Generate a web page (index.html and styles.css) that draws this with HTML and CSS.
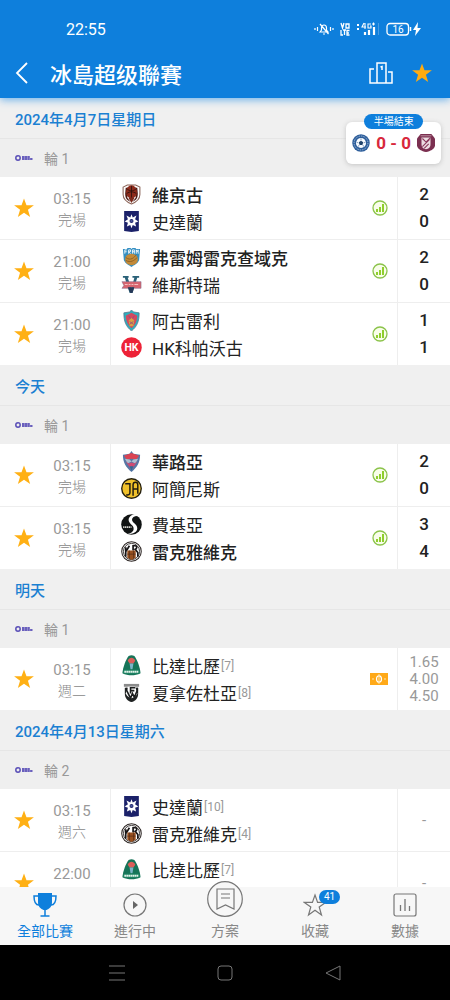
FILE: index.html
```html
<!DOCTYPE html>
<html lang="zh-Hant">
<head>
  <meta charset="UTF-8">
  <meta name="viewport" content="width=device-width, initial-scale=1">
  <title>冰島超级聯賽</title>
  <link rel="stylesheet" href="styles.css">
</head>
<body>
  <!-- icons and club badges -->
  <svg class="sprites" aria-hidden="true">
    <symbol id="star" viewBox="0 0 24 24"><path fill="currentColor" d="M12 1.5l2.7 7.6h8.1l-6.5 4.9 2.4 7.9-6.7-4.7-6.7 4.7L7.700 14 1.200 9.100h8.100z"/></symbol>
    <symbol id="stats" viewBox="0 0 16 16"><circle cx="8" cy="8" r="7" fill="#f8fde9" stroke="#8bc34a" stroke-width="1.300"/><path d="M4 9h2v3H4zM7 7h2v5H7zM10 4h2v8h-2z" fill="#8fce2d"/></symbol>
    <symbol id="league" viewBox="0 0 18 8"><circle cx="3" cy="4" r="2.200" fill="#efefef" stroke="#5b50b8" stroke-width="1.500"/><path d="M7 3h8M7 5h10.500" stroke="#6a60bd" stroke-width="1.800" stroke-dasharray="2.400 .3"/></symbol>
    <symbol id="vikingur" viewBox="0 0 20 20"><path d="M2 3l4-2h8l4 2v7c0 4-3 7-8 9-5-2-8-5-8-9z" fill="#fff" stroke="#8a6357"/><path d="M4.500 3.500h2L6 13l3 4c-4-2-5-4-5-8zM15.500 3.500h-2L14 13l-3 4c4-2 5-4 5-8z" fill="#4a1a14"/><ellipse cx="10" cy="7.500" rx="5.200" ry="6.300" fill="#8c2b1b"/><path d="M10 2v11M6 5c3 2 5 2 8 0M5.500 9c3-2 6-2 9 0" stroke="#2c120d" stroke-width=".8" fill="none"/><path d="M7 13l3 5 3-5" fill="#7a2a1c"/></symbol>
    <symbol id="stjarnan" viewBox="0 0 20 20"><path d="M3 0h14v19L10 20l-7-1z" fill="#1b2169"/><path d="M10 3l1.200 3.200 3.600-1.800-1.400 3.400 3.100 2.200-3.100 1.200 1 3.500-3.200-1.400L10 16.500l-1.200-3.200-3.200 1.400 1-3.500L3.500 10l3.100-2.200-1.400-3.400 3.600 1.800z" fill="#fff"/><circle cx="10" cy="9.500" r="1.900" fill="#1b2169"/><path d="M9 9.500h2" stroke="#91a5df" stroke-width=".8"/></symbol>
    <symbol id="fram" viewBox="0 0 20 22"><path d="M1 2h4l1-1h3l1 1 1-1h3l1 1h4l-1 12c-2 4-5 5-8 7-3-2-6-3-8-7z" fill="#348fc3"/><path d="M3 3v4M3 3h2M3 5h2M7 7V3h2v2H7l2 2M11 7V3h2v4M11 5h2M15 7V3l1 2 1-2v4" fill="none" stroke="#fff" stroke-width=".9"/><ellipse cx="10" cy="13" rx="6.700" ry="6" fill="#c38a38"/><path d="M4 11c5 4 9 0 11-3M4 14c5 3 9 0 12-3" fill="none" stroke="#805721" stroke-width=".8"/></symbol>
    <symbol id="vestri" viewBox="0 0 22 20"><path d="M2 1h6v2H7l4 11 3-11h-2V1h7v2h-2l-5 16H9L4 3H2z" fill="#2a6178"/><path d="M1 7h20v7h-7l-1-1H9l-1 1H1l2-3z" fill="#d7656f" stroke="#8a6e8c" stroke-width=".6"/><path d="M4 10h3M8 10h2M11 10h2M14 10h4" stroke="#f3c3c3" stroke-width="1"/><path d="M7 13l3 6h2l2-6" fill="#263857"/></symbol>
    <symbol id="ia-shield" viewBox="0 0 20 22"><path d="M10 0l2 2 6 1c0 9-2 14-8 19C4 17 2 12 2 3l6-1z" fill="#2eaebd" stroke="#547389" stroke-width=".8"/><path d="M10 3l6 3c0 5-2 10-6 13-4-3-6-8-6-13z" fill="#d34960"/><path d="M10 8l3 3-1 6h-4l-1-6z" fill="#dba044"/><path d="M7 6l2 3M13 6l-2 3M8 12l4 3M12 12l-4 3" stroke="#8a4a80" stroke-width=".8"/></symbol>
    <symbol id="hk" viewBox="0 0 20 20"><circle cx="10" cy="10" r="9.800" fill="#ed2237"/><text x="10" y="13.500" text-anchor="middle" class="badge-letters" fill="#fff">HK</text></symbol>
    <symbol id="valur" viewBox="0 0 20 22"><path d="M10 0l2 3 7 1c0 8-3 13-9 18C4 17 1 12 1 4l7-1z" fill="#5777a5"/><path d="M2 5l8-3 8 3-3 4-5-1-5 1z" fill="#da4353"/><path d="M3 8l5 1 2 2 2-2 5-1-3 5-4-2-4 2z" fill="#aebed0"/><path d="M4 11l3 2 3-1 3 1 3-2-6 9z" fill="#cf4a72"/><path d="M8 16h4l-2 5z" fill="#2d6a96"/></symbol>
    <symbol id="ia" viewBox="0 0 20 20"><circle cx="10" cy="10" r="9.300" fill="#f0c02a" stroke="#25200f" stroke-width="1.300"/><path d="M4 5.500h4.500v8.500c0 1.800-1.500 2.500-3.500 2M11.500 17V6.500c0-3.300 4.500-3.300 4.500 0V15M11.500 10.500H16" fill="none" stroke="#201b10" stroke-width="1.400"/></symbol>
    <symbol id="fylkir" viewBox="0 0 20 20"><circle cx="10" cy="10" r="9.800" fill="#101313"/><path d="M13.500 0C9 1 6.500 3.500 7.500 7c1 3 5 4 4.500 7.500-.3 2.500-3 4.300-6 4.500 6 0 9.500-2 9.500-5.500 0-4-5-5-5-8 0-2.500 2.500-3.800 6-3.500z" fill="#fff"/><path d="M2 12.500h8" stroke="#d4d4cf" stroke-width="1.600" stroke-dasharray="1.300 .5"/></symbol>
    <symbol id="kr" viewBox="0 0 20 20"><circle cx="10" cy="10" r="9.300" fill="#fff" stroke="#2b2422" stroke-width="1"/><circle cx="10" cy="10" r="7.700" fill="#fff" stroke="#211d1c" stroke-width=".8"/><path d="M4.500 15V6M8 4.500l-3 5M11.500 9V4.500h2c2 0 2 3 0 3.500l2.500 3v4" stroke="#171516" stroke-width="1.600" fill="none"/><path d="M6 9h8v7l-4 2-4-2z" fill="#98501f"/><path d="M8 9v8M12 9v8M6 12.500h8" stroke="#4c2916" stroke-width=".6"/></symbol>
    <symbol id="breidablik" viewBox="0 0 20 22"><path d="M7 1c2-1 4-1 6 0 3 4 6 12 6.500 18-6 3-13 3-19 0C1 13 4 5 7 1z" fill="#167458"/><path d="M6 6c2-4 6-4 8 0l-2 3H8z" fill="#da5d59"/><path d="M8 9h4l-1 6H9z" fill="#7ab4c7"/><path d="M2 15.500h16l1 3.500c-6 1-12 1-18 0z" fill="#218565"/><path d="M2.500 17.500h15" stroke="#e7f5ed" stroke-width="2" stroke-dasharray="1.700 .4"/></symbol>
    <symbol id="fh" viewBox="0 0 20 22"><path d="M2 2h16v3H2z" fill="#8b8b8b"/><path d="M3 6h14v6c0 5-3 8-7 9-4-1-7-4-7-9z" fill="#202323"/><path d="M6 5h8l2 7c-1 3-3 4-6 5-3-1-5-2-6-5z" fill="#fff"/><path d="M5 6v3l4 8 2-5 2 4 3-7V6M9 12V6h5M9 9h4" stroke="#1b1d1d" stroke-width="1.700" fill="none"/></symbol>
    <symbol id="home-club" viewBox="0 0 20 20"><circle cx="10" cy="10" r="9.700" fill="#2d5e9b"/><circle cx="10" cy="10" r="7.700" fill="none" stroke="#bfd3e6" stroke-dasharray="1 1"/><circle cx="10" cy="10" r="5.600" fill="#f9fcff"/><path d="M10 7.500l2.500 1.800-1 3h-3l-1-3z" fill="#20436b"/><path d="M10 5v2M5 9l2 1M15 9l-2 1M7 14l1-2M13 14l-1-2" stroke="#7993b7"/></symbol>
    <symbol id="away-club" viewBox="0 0 20 20"><path d="M4 0h12l4 5v8c-1 4-5 6-10 7-5-1-9-3-10-7V5z" fill="#7b2f50"/><path d="M5 4h10v7c0 4-2 5-5 6-3-1-5-2-5-6z" fill="#ecdde2"/><path d="M6 5l4 4 5-5M6 14l8-8M8 16l5-5" stroke="#8a395b" stroke-width="1.200" fill="none"/><path d="M4 2h12" stroke="#c29ba9"/></symbol>
  </svg>

  <div class="screen">
    <header class="header">
      <div class="status-bar">
        <time class="clock">22:55</time>
        <div class="status-icons">
          <svg width="20" height="16" viewBox="0 0 20 16" fill="none" stroke="#fff" stroke-width="1.200"><path d="M1 7v2M3.500 6v4M16.500 6v4M19 7v2M6 11l1.500-2V7c0-4 5-4 5 0v2l1.500 2zM9 13h2M6 3l8.500 10"/></svg>
          <svg width="10" height="14" viewBox="0 0 10 14" fill="none" stroke="#fff" stroke-width="1.300"><path d="M1 1l1.500 5L4 1M6 2h3v4H6zM1 8v5h2M3 8h3M4.500 8v5M9.500 8.500H7v4.500h2.500M7 11h2"/></svg>
          <svg width="24" height="16" viewBox="0 0 24 16"><path d="M2 3v2M2 7v2" stroke="#fff" stroke-width="2"/><path d="M8 2L6 6h4M9 2v6M15 3h-3v4h3V5h-1M16 3h3M17.500 1.500v3" fill="none" stroke="#fff" stroke-width="1.100"/><path d="M9 11v3M13 9v5M18 6v8" stroke="#fff" stroke-width="2.200"/><path d="M22.500 2v12" stroke="#489be2"/></svg>
          <svg width="36" height="16" viewBox="0 0 36 16"><rect x="1" y="2.500" width="21.500" height="11.500" rx="3" fill="none" stroke="#fff" stroke-width="1.300"/><text x="12" y="12" text-anchor="middle" class="battery-text" fill="#fff">16</text><path d="M24.500 6v4" stroke="#fff" stroke-width="1.500"/><path d="M32 1l-5 8h3l-1 6 6-8h-3.500z" fill="#fff"/></svg>
        </div>
      </div>
      <div class="title-bar">
        <button class="icon-btn back" aria-label="返回"><svg width="14" height="22" viewBox="0 0 14 22"><path d="M12 1L2 11l10 10" fill="none" stroke="#fff" stroke-width="1.800"/></svg></button>
        <h1>冰島超级聯賽</h1>
        <button class="icon-btn" aria-label="排名"><svg width="24" height="22" viewBox="0 0 24 22"><path d="M5 7H1v14h22V10h-4M8 21V1h9v20M11.500 5L13 4.500V8" fill="none" stroke="#fff" stroke-width="1.500"/></svg></button>
        <button class="icon-btn gold" aria-label="收藏聯賽"><svg width="22" height="22"><use href="#star"/></svg></button>
      </div>
    </header>

    <main class="list">
      <a class="live-card" href="#">
        <span class="live-state">半場結束</span>
        <svg width="18" height="18"><use href="#home-club"/></svg>
        <span class="live-score">0 - 0</span>
        <svg width="18" height="18"><use href="#away-club"/></svg>
      </a>

      <section>
        <h2>2024年4月7日星期日</h2>
        <div class="round"><svg width="18" height="8"><use href="#league"/></svg>輪 1</div>
        <div class="match">
          <button class="fav" aria-label="收藏"><svg width="22" height="22"><use href="#star"/></svg></button>
          <div class="when"><span class="time">03:15</span><span>完場</span></div>
          <div class="teams">
            <div class="team win"><svg><use href="#vikingur"/></svg>維京古</div>
            <div class="team"><svg><use href="#stjarnan"/></svg>史達蘭</div>
          </div>
          <svg class="info" width="16" height="16"><use href="#stats"/></svg>
          <div class="score"><span>2</span><span>0</span></div>
        </div>
        <div class="match">
          <button class="fav" aria-label="收藏"><svg width="22" height="22"><use href="#star"/></svg></button>
          <div class="when"><span class="time">21:00</span><span>完場</span></div>
          <div class="teams">
            <div class="team win"><svg><use href="#fram"/></svg>弗雷姆雷克查域克</div>
            <div class="team"><svg><use href="#vestri"/></svg>維斯特瑞</div>
          </div>
          <svg class="info" width="16" height="16"><use href="#stats"/></svg>
          <div class="score"><span>2</span><span>0</span></div>
        </div>
        <div class="match">
          <button class="fav" aria-label="收藏"><svg width="22" height="22"><use href="#star"/></svg></button>
          <div class="when"><span class="time">21:00</span><span>完場</span></div>
          <div class="teams">
            <div class="team"><svg><use href="#ia-shield"/></svg>阿古雷利</div>
            <div class="team"><svg><use href="#hk"/></svg>HK科帕沃古</div>
          </div>
          <svg class="info" width="16" height="16"><use href="#stats"/></svg>
          <div class="score"><span>1</span><span>1</span></div>
        </div>
      </section>

      <section>
        <h2>今天</h2>
        <div class="round"><svg width="18" height="8"><use href="#league"/></svg>輪 1</div>
        <div class="match">
          <button class="fav" aria-label="收藏"><svg width="22" height="22"><use href="#star"/></svg></button>
          <div class="when"><span class="time">03:15</span><span>完場</span></div>
          <div class="teams">
            <div class="team win"><svg><use href="#valur"/></svg>華路亞</div>
            <div class="team"><svg><use href="#ia"/></svg>阿簡尼斯</div>
          </div>
          <svg class="info" width="16" height="16"><use href="#stats"/></svg>
          <div class="score"><span>2</span><span>0</span></div>
        </div>
        <div class="match">
          <button class="fav" aria-label="收藏"><svg width="22" height="22"><use href="#star"/></svg></button>
          <div class="when"><span class="time">03:15</span><span>完場</span></div>
          <div class="teams">
            <div class="team"><svg><use href="#fylkir"/></svg>費基亞</div>
            <div class="team win"><svg><use href="#kr"/></svg>雷克雅維克</div>
          </div>
          <svg class="info" width="16" height="16"><use href="#stats"/></svg>
          <div class="score"><span>3</span><span>4</span></div>
        </div>
      </section>

      <section>
        <h2>明天</h2>
        <div class="round"><svg width="18" height="8"><use href="#league"/></svg>輪 1</div>
        <div class="match">
          <button class="fav" aria-label="收藏"><svg width="22" height="22"><use href="#star"/></svg></button>
          <div class="when"><span class="time">03:15</span><span>週二</span></div>
          <div class="teams">
            <div class="team"><svg><use href="#breidablik"/></svg>比達比歷<small>[7]</small></div>
            <div class="team"><svg><use href="#fh"/></svg>夏拿佐杜亞<small>[8]</small></div>
          </div>
          <svg class="info" width="18" height="12" viewBox="0 0 18 12"><path d="M0 0h18v12H0z" fill="#ffa918"/><ellipse cx="9" cy="6" rx="2.500" ry="3.200" fill="none" stroke="#fff" stroke-width="1.200"/><path d="M9 1v10M3 5v2M15 5v2" stroke="#ffe4ad"/></svg>
          <div class="odds"><span>1.65</span><span>4.00</span><span>4.50</span></div>
        </div>
      </section>

      <section>
        <h2>2024年4月13日星期六</h2>
        <div class="round"><svg width="18" height="8"><use href="#league"/></svg>輪 2</div>
        <div class="match">
          <button class="fav" aria-label="收藏"><svg width="22" height="22"><use href="#star"/></svg></button>
          <div class="when"><span class="time">03:15</span><span>週六</span></div>
          <div class="teams">
            <div class="team"><svg><use href="#stjarnan"/></svg>史達蘭<small>[10]</small></div>
            <div class="team"><svg><use href="#kr"/></svg>雷克雅維克<small>[4]</small></div>
          </div>
          <div class="odds"><span>-</span></div>
        </div>
        <div class="match">
          <button class="fav" aria-label="收藏"><svg width="22" height="22"><use href="#star"/></svg></button>
          <div class="when"><span class="time">22:00</span></div>
          <div class="teams">
            <div class="team"><svg><use href="#breidablik"/></svg>比達比歷<small>[7]</small></div>
            <div class="team"><svg><use href="#fh"/></svg></div>
          </div>
          <div class="odds"><span>-</span></div>
        </div>
      </section>
    </main>

    <nav class="tabs">
      <a class="tab active" href="#">
        <svg width="24" height="24" viewBox="0 0 24 24"><path d="M5 0h14v9c0 5-3 7-5.500 8h-3C8 16 5 14 5 9z" fill="#0e7fdc"/><path d="M12 16v7M7.500 23h9M5 3H1c0 6 1 9 5 9M19 3h4c0 6-1 9-5 9" fill="none" stroke="#0e7fdc" stroke-width="1.500"/></svg>
        全部比賽
      </a>
      <a class="tab" href="#">
        <svg width="24" height="24" viewBox="0 0 24 24"><circle cx="12" cy="12" r="11" fill="none" stroke="#777" stroke-width="1.200"/><path d="M10 8l5 4-5 4z" fill="#666"/></svg>
        進行中
      </a>
      <a class="tab" href="#">
        <svg width="36" height="36" viewBox="0 0 36 36"><circle cx="18" cy="18" r="17.300" fill="#f7f7f7" stroke="#777" stroke-width="1.200"/><path d="M10 8h17v20l-8.500-4L10 28zM14 13h9M14 17h9" fill="none" stroke="#777" stroke-width="1.200"/></svg>
        方案
      </a>
      <a class="tab" href="#">
        <svg width="24" height="24" viewBox="0 0 24 24"><path d="M12 2l2.600 7.400h8L16.200 14l2.300 8-6.500-4.700L5.500 22l2.300-8L1.400 9.400h8z" fill="none" stroke="#777" stroke-width="1.200"/></svg>
        <span class="count">41</span>
        收藏
      </a>
      <a class="tab" href="#">
        <svg width="24" height="24" viewBox="0 0 24 24"><rect x="1" y="1" width="22" height="22" rx="2" fill="none" stroke="#777" stroke-width="1.200"/><path d="M7.500 12v6M12 6v12M16.500 13v5" stroke="#777" stroke-width="1.300"/></svg>
        數據
      </a>
    </nav>

    <div class="system-bar">
      <button class="icon-btn" aria-label="選單"><svg width="16" height="16" viewBox="0 0 16 16"><path d="M0 1h16M0 8h16M0 15h16" stroke="#777"/></svg></button>
      <button class="icon-btn" aria-label="主畫面"><svg width="16" height="16" viewBox="0 0 16 16"><rect x="1" y="1" width="14" height="14" rx="3" fill="none" stroke="#777"/></svg></button>
      <button class="icon-btn" aria-label="上一頁"><svg width="16" height="16" viewBox="0 0 16 16"><path d="M15 1v14L1 8z" fill="none" stroke="#777" stroke-linejoin="round"/></svg></button>
    </div>
  </div>
</body>
</html>
```

FILE: styles.css
```css
* {
  box-sizing: border-box;
}
body {
  margin: 0;
  font-family: Roboto, "Noto Sans CJK TC", sans-serif;
  color: #222;
  background: #fff;
}
a {
  color: inherit;
  text-decoration: none;
}
button {
  border: none;
  padding: 0;
  background: none;
  cursor: pointer;
}
.sprites {
  display: none;
}
.screen {
  display: flex;
  flex-direction: column;
  height: 100vh;
}

/* header */
.header {
  flex-shrink: 0;
  background: #0e7fdc;
  color: #fff;
  box-shadow: 0 2px 8px #6fb2ea;
  z-index: 1;
}
.status-bar {
  display: flex;
  align-items: center;
  justify-content: space-between;
  height: 48px;
  padding: 10px 28px 0 66px;
}
.clock {
  font-size: 16px;
}
.status-icons {
  display: flex;
  align-items: center;
  gap: 6px;
}
.battery-text {
  font-size: 10px;
}
.title-bar {
  display: flex;
  align-items: center;
  height: 50px;
  padding: 0 16px 0 15px;
}
.title-bar h1 {
  flex: 1;
  margin: 0 0 0 7px;
  font-size: 22px;
  font-weight: 500;
}
.icon-btn {
  display: flex;
  align-items: center;
  justify-content: center;
}
.title-bar .icon-btn {
  min-width: 24px;
  height: 40px;
}
.title-bar .back {
  min-width: 14px;
  margin-right: 14px;
}
.title-bar .gold {
  min-width: 22px;
  margin-left: 18px;
  margin-right: 1px;
  color: #ffab10;
}

/* match list */
.list {
  position: relative;
  flex: 1;
  min-height: 0;
  overflow-y: auto;
  scrollbar-width: none;
}
h2 {
  margin: 0;
  padding: 2px 15px 0;
  height: 41px;
  line-height: 40px;
  font-size: 15px;
  font-weight: 500;
  color: #1b80d2;
  background: #f0f0f0;
  border-bottom: 1px solid #e6e6e6;
}
.round {
  display: flex;
  align-items: center;
  gap: 11px;
  height: 38px;
  padding-left: 15px;
  font-size: 14px;
  color: #999;
  background: #efefef;
}
.match {
  display: flex;
  align-items: center;
  height: 62px;
}
.match + .match {
  height: 63px;
  border-top: 1px solid #eee;
}
.fav {
  display: flex;
  justify-content: center;
  width: 48px;
  color: #ffb014;
}
.when {
  display: flex;
  flex-direction: column;
  align-self: stretch;
  width: 62px;
  padding: 12px 14px 0 0;
  line-height: 21px;
  font-size: 14px;
  font-weight: 300;
  text-align: center;
  color: #888;
}
.time {
  font-size: 15px;
  font-weight: 400;
  color: #999;
}
.teams {
  display: flex;
  flex-direction: column;
  justify-content: center;
  flex: 1;
  align-self: stretch;
  padding-left: 10px;
  border-left: 1px solid #eee;
}
.team {
  display: flex;
  align-items: center;
  height: 27px;
  font-size: 17px;
  white-space: nowrap;
}
.team svg {
  width: 21px;
  height: 21px;
  margin-right: 10px;
}
.team small {
  margin-left: 1px;
  font-size: 12px;
  color: #999;
}
.win {
  font-weight: 500;
}
.badge-letters {
  font-size: 10px;
  font-weight: 700;
}
.info {
  flex-shrink: 0;
  margin-right: 9px;
}
.score,
.odds {
  display: flex;
  flex-direction: column;
  align-items: center;
  justify-content: center;
  align-self: stretch;
  width: 53px;
  border-left: 1px solid #eee;
}
.score {
  font-size: 17px;
  font-weight: 500;
  line-height: 27px;
}
.odds {
  font-size: 15px;
  line-height: 17px;
  color: #999;
}

/* live match floating over the list */
.live-card {
  position: absolute;
  top: 24px;
  right: 9px;
  display: flex;
  align-items: center;
  gap: 6px;
  height: 42px;
  padding: 0 6px;
  border-radius: 6px;
  background: #fff;
  box-shadow: 0 1px 5px #c4c4c4;
}
.live-state {
  position: absolute;
  top: -8px;
  left: 18px;
  right: 18px;
  border-radius: 8px;
  font-size: 10px;
  line-height: 15px;
  text-align: center;
  color: #fff;
  background: #0e7fdc;
}
.live-score {
  font-size: 17px;
  font-weight: 700;
  color: #d8283c;
}

/* bottom tabs */
.tabs {
  display: flex;
  align-items: flex-end;
  flex-shrink: 0;
  height: 58px;
  background: #f7f7f7;
  z-index: 1;
}
.tab {
  position: relative;
  display: flex;
  flex-direction: column;
  align-items: center;
  flex: 1;
  gap: 5px;
  padding-bottom: 5px;
  font-size: 14px;
  line-height: 18px;
  color: #888;
}
.active {
  color: #0e7fdc;
}
.count {
  position: absolute;
  top: -3px;
  left: 50%;
  margin-left: 4px;
  padding: 0 5px;
  border-radius: 8px;
  font-size: 10px;
  line-height: 14px;
  color: #fff;
  background: #0e7fdc;
}
.system-bar {
  display: flex;
  align-items: center;
  justify-content: center;
  gap: 92px;
  flex-shrink: 0;
  height: 55px;
  background: #000;
}
```
